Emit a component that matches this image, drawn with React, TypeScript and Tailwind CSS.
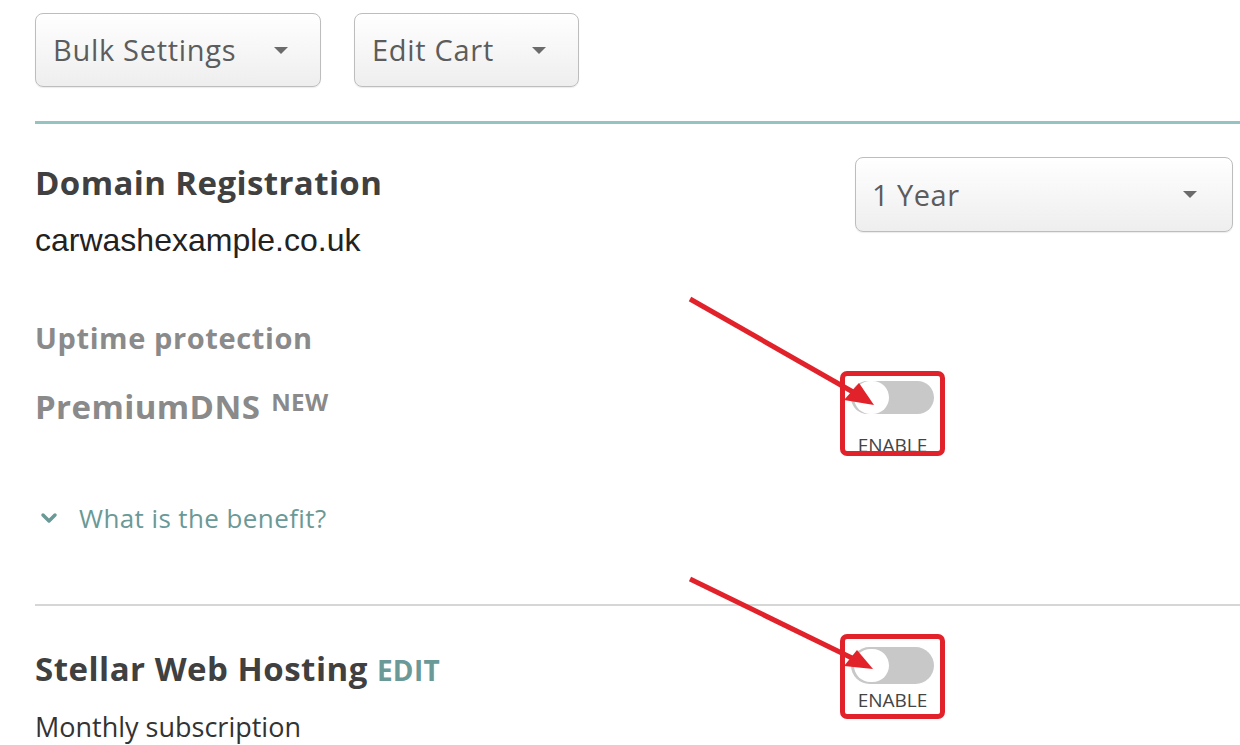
import { ChevronDown } from "lucide-react";

function Caret() {
  return <span className="h-0 w-0 border-x-[7px] border-t-[7px] border-x-transparent border-t-[#6b6b6b]" />;
}

function DropButton({ label, className }: { label: string; className: string }) {
  return (
    <button
      className={`flex h-[74px] items-center justify-between rounded-[8px] border border-[#bdbdbd] bg-linear-to-b from-white to-[#eeeeee] pl-[17px] pr-[32px] text-[29px] tracking-[0.7px] text-[#5c5c5c] shadow-[0_1px_1px_rgba(0,0,0,0.08)] ${className}`}
    >
      <span>{label}</span>
      <Caret />
    </button>
  );
}

function EnableToggle({ pillGap, labelGap }: { pillGap: string; labelGap: string }) {
  return (
    <div className="flex h-[85px] w-[105px] flex-col items-center overflow-hidden rounded-[7px] border-[5px] border-[#e1222a]">
      <div className={`flex h-[37px] w-[83px] items-center rounded-[19px] bg-[#c8c8c8] pl-[3px] ${pillGap}`}>
        <div className="h-[33px] w-[35px] rounded-full bg-white" />
      </div>
      <span className={`text-[19px] leading-[20px] text-[#444] ${labelGap}`}>ENABLE</span>
    </div>
  );
}

export default function App() {
  return (
    <div className="relative h-[745px] w-[1240px] overflow-hidden bg-white pl-[35px] font-['Open_Sans','Lato',sans-serif]">
      <div className="flex gap-[33px] pt-[13px]">
        <DropButton label="Bulk Settings" className="w-[286px]" />
        <DropButton label="Edit Cart" className="w-[225px]" />
      </div>

      <div className="mt-[34px] h-[3px] bg-[#94c3c2]" />

      <div className="mt-[33px] flex justify-between pr-[7px]">
        <div className="pt-[7px]">
          <h2 className="text-[33px] font-bold leading-[38px] tracking-[0.4px] text-[#404040]">Domain Registration</h2>
          <p className="mt-[20px] font-['Liberation_Sans',Arial,sans-serif] text-[32px] leading-[36px] text-[#222]">
            carwashexample.co.uk
          </p>
        </div>
        <button className="flex h-[75px] w-[378px] items-center justify-between rounded-[8px] border border-[#bdbdbd] bg-linear-to-b from-white to-[#eeeeee] pl-[16px] pr-[35px] text-[29px] tracking-[0.5px] text-[#5c5c5c] shadow-[0_1px_1px_rgba(0,0,0,0.08)]">
          <span>1 Year</span>
          <Caret />
        </button>
      </div>

      <p className="mt-[63px] text-[29px] font-bold leading-[34px] tracking-[0.6px] text-[#8a8a8a]">Uptime protection</p>

      <div className="mt-[16px] flex items-start">
        <div className="w-[805px] pt-[17px]">
          <span className="text-[33px] font-bold leading-[38px] tracking-[0.4px] text-[#8a8a8a]">
            PremiumDNS
            <sup className="relative -top-[8px] ml-[11px] text-[24px] leading-none">NEW</sup>
          </span>
        </div>
        <EnableToggle pillGap="mt-[5px]" labelGap="mt-[21px]" />
      </div>

      <div className="mt-[47px] flex items-center text-[26px] leading-[30px] tracking-[0.4px] text-[#6a9997]">
        <ChevronDown className="ml-[2px] h-[24px] w-[24px]" strokeWidth={3.5} />
        <span className="ml-[18px]">What is the benefit?</span>
      </div>

      <div className="mt-[71px] h-[2px] bg-[#d6d6d6]" />

      <div className="mt-[28px] flex items-start">
        <div className="w-[805px] pt-[16px]">
          <h2 className="text-[33px] font-bold leading-[38px] tracking-[0.5px] text-[#404040]">
            Stellar Web Hosting <span className="text-[28px] tracking-[0.3px] text-[#6a9997]">EDIT</span>
          </h2>
          <p className="mt-[22px] text-[27px] leading-[32px] text-[#333]">Monthly subscription</p>
        </div>
        <EnableToggle pillGap="mt-[8px]" labelGap="mt-[6px]" />
      </div>

      {/* callout arrows pointing at the toggles */}
      <svg className="pointer-events-none absolute inset-0" width="1240" height="745" viewBox="0 0 1240 745">
        <line x1="690" y1="299" x2="853" y2="392" stroke="#e1222a" strokeWidth="5" />
        <polygon points="874,405 844,400 859,383" fill="#e1222a" />
        <line x1="690" y1="579" x2="852" y2="658" stroke="#e1222a" strokeWidth="5" />
        <polygon points="873,669 844,666 857,650" fill="#e1222a" />
      </svg>
    </div>
  );
}
